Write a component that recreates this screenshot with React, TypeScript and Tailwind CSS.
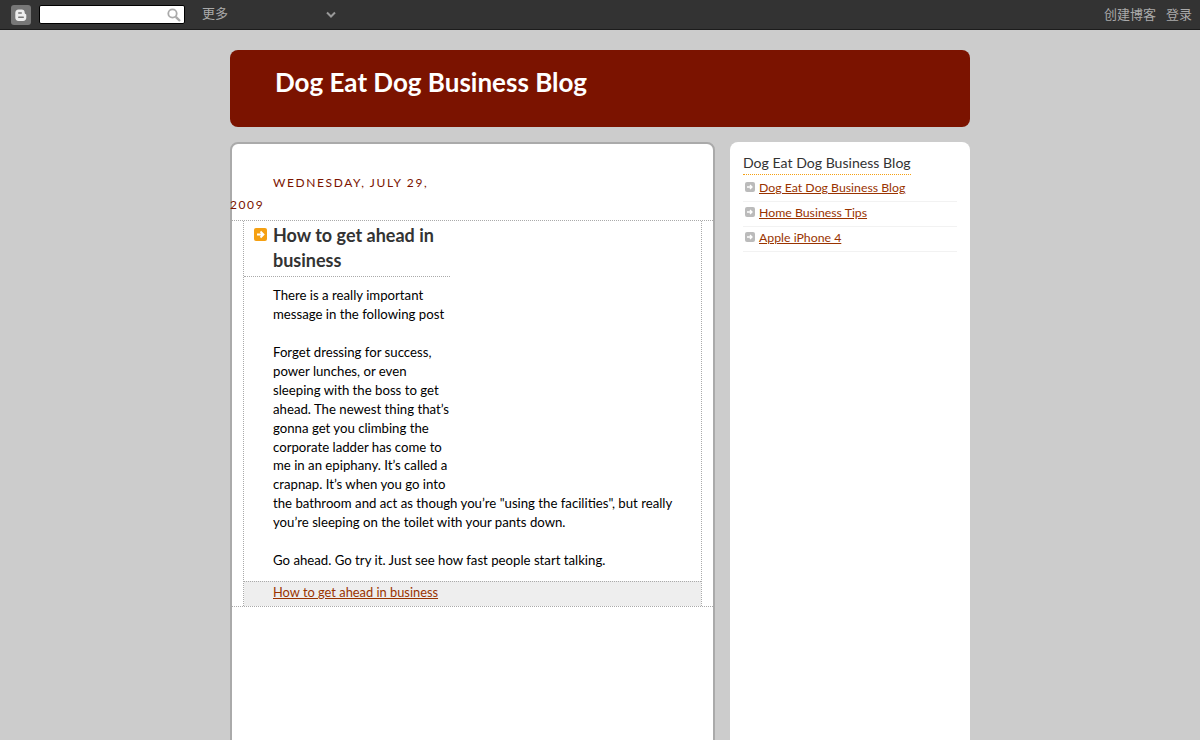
import React from 'react'

const font = "[font-family:Lato,'Noto_Sans_CJK_SC',sans-serif]"

function BlogLogo() {
  return (
    <svg width="20" height="20" viewBox="0 0 20 20" className="shrink-0">
      <rect width="20" height="20" rx="3" fill="#777" />
      <path d="M7.5 4.5h3.2c1.8 0 3 1.2 3 2.9v.7c0 .5.3.8.7.9.6.1.9.5.9 1.100v2.700c0 1.900-1.300 3.200-3.200 3.200H7.500c-1.900 0-3.200-1.300-3.200-3.200V7.700c0-1.900 1.300-3.200 3.200-3.200z" fill="#eee" />
      <rect x="7" y="7.300" width="4" height="1.500" rx=".7" fill="#777" />
      <rect x="7" y="11.500" width="6" height="1.500" rx=".7" fill="#777" />
    </svg>
  )
}

function SearchIcon() {
  return (
    <svg width="14" height="14" viewBox="0 0 14 14" fill="none" stroke="#aaa" className="shrink-0">
      <circle cx="5.500" cy="5.500" r="4.200" strokeWidth="1.800" />
      <path d="M8.800 8.800L13 13" strokeWidth="2.400" />
    </svg>
  )
}

function SideLink({ label }: { label: string }) {
  return (
    <li className="flex h-[25px] items-start border-b border-[#f2f2f2] pl-[2px] pt-[1px]">
      <span className="mt-[4px] mr-[4px] flex h-[10px] w-[10px] items-center justify-center rounded-[2px] bg-[#bbb] text-[8px] leading-none text-white">
        <svg width="8" height="8" viewBox="0 0 8 8" fill="none" stroke="#fff" strokeWidth="1.300">
          <path d="M1 4h5M4 2l2 2-2 2" />
        </svg>
      </span>
      <a href="#" className="text-[12.300px] leading-[19px] text-[#993300] underline">{label}</a>
    </li>
  )
}

export default function App() {
  return (
    <div className={`h-[740px] overflow-hidden bg-[#cccccc] ${font}`}>
      <div className="flex h-[30px] items-center border-b border-[#1c1c1c] bg-[#333333] pl-[11px] pr-[8px]">
        <BlogLogo />
        <div className="ml-[8px] flex h-[19px] w-[146px] items-center justify-end rounded-[2px] border border-black bg-white pr-[3px]">
          <SearchIcon />
        </div>
        <span className="ml-[17px] mb-[2px] text-[13px] text-[#aaaaaa]">更多</span>
        <svg width="10" height="8" viewBox="0 0 10 8" fill="none" stroke="#999" strokeWidth="2" className="ml-[98px]">
          <path d="M1 1.500l4 4 4-4" />
        </svg>
        <span className="ml-auto text-[13px] text-[#aaaaaa]">创建博客</span>
        <span className="ml-[10px] text-[13px] text-[#aaaaaa]">登录</span>
      </div>

      <div className="mx-auto w-[740px] pt-[20px]">
        <div className="flex h-[77px] items-start rounded-[8px] bg-[#7b1300] pl-[45px] pt-[14px]">
          <h1 className="text-[26px] font-bold leading-[36px] text-white">Dog Eat Dog Business Blog</h1>
        </div>

        <div className="mt-[15px] flex justify-between">
          <div className="h-[640px] w-[485px] rounded-t-[8px] border-2 border-[#aaaaaa] bg-white pt-[28px]">
            <h2 className="ml-[-2px] w-[220px] pb-[4px] indent-[43px] text-[12px] font-normal uppercase leading-[22px] tracking-[1.600px] text-[#7b1300]">
              Wednesday, July 29, 2009
            </h2>
            <div className="border-y border-dotted border-[#aaaaaa] pl-[11px] pr-[11px]">
              <div className="border-x border-dotted border-[#aaaaaa]">
                <div className="float-right h-[272px] w-[251px]" />
                <h3 className="relative w-[206px] border-b border-dotted border-[#aaaaaa] pb-[3px] pl-[29px] pt-[2px] text-[18px] font-bold leading-[25px] text-[#333333]">
                  <span className="absolute left-[10px] top-[7px] flex h-[13px] w-[13px] items-center justify-center rounded-[2px] bg-[#f5a012]">
                    <svg width="9" height="9" viewBox="0 0 9 9" fill="none" stroke="#fff" strokeWidth="1.800">
                      <path d="M1 4.500h6M4.500 1.500l3 3-3 3" />
                    </svg>
                  </span>
                  How to get ahead in business
                </h3>
                <div className="pb-[11px] pl-[29px] pr-[20px] pt-[9px] text-[13.200px] leading-[18.930px] text-black">
                  There is a really important<br />message in the following post
                  <br /><br />
                  Forget dressing for success,<br />power lunches, or even<br />sleeping with the boss to get<br />ahead. The newest thing that’s<br />gonna get you climbing the<br />corporate ladder has come to<br />me in an epiphany. It’s called a<br />crapnap. It’s when you go into<br />the bathroom and act as though you’re "using the facilities", but really<br />you’re sleeping on the toilet with your pants down.
                  <br /><br />
                  Go ahead. Go try it. Just see how fast people start talking.
                </div>
                <div className="clear-both h-[25px] border-t border-dotted border-[#aaaaaa] bg-[#eeeeee] pl-[29px] text-[12.850px] leading-[21px]">
                  <a href="#" className="text-[#993300] underline">How to get ahead in business</a>
                </div>
              </div>
            </div>
          </div>

          <div className="h-[640px] w-[240px] rounded-t-[8px] bg-white pl-[13px] pr-[13px] pt-[8px]">
            <h2 className="inline-block border-b border-dotted border-[#f5a012] pb-[1px] text-[14.100px] font-normal leading-[21px] text-[#333333]">
              Dog Eat Dog Business Blog
            </h2>
            <ul className="mt-[2px]">
              <SideLink label="Dog Eat Dog Business Blog" />
              <SideLink label="Home Business Tips" />
              <SideLink label="Apple iPhone 4" />
            </ul>
          </div>
        </div>
      </div>
    </div>
  )
}
